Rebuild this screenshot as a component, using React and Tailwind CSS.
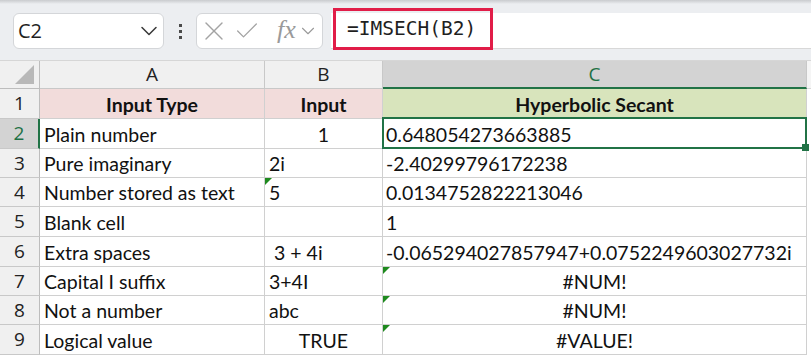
import { ChevronDown, X, Check } from 'lucide-react';

const ROWS = [
  { n: 1, h: 'h-[30px]', a: 'Input Type', b: 'Input', c: 'Hyperbolic Secant', head: true },
  { n: 2, h: 'h-[30px]', a: 'Plain number', b: '1', bAlign: 'center', c: '0.648054273663885', selected: true },
  { n: 3, h: 'h-[29px]', a: 'Pure imaginary', b: '2i', c: '-2.40299796172238' },
  { n: 4, h: 'h-[29px]', a: 'Number stored as text', b: '5', bFlag: true, c: '0.0134752822213046' },
  { n: 5, h: 'h-[30px]', a: 'Blank cell', b: '', c: '1' },
  { n: 6, h: 'h-[30px]', a: 'Extra spaces', b: '\u00a03 + 4i', c: '-0.065294027857947+0.0752249603027732i' },
  { n: 7, h: 'h-[29px]', a: 'Capital I suffix', b: '3+4I', c: '#NUM!', cAlign: 'center', cFlag: true },
  { n: 8, h: 'h-[29px]', a: 'Not a number', b: 'abc', c: '#NUM!', cAlign: 'center', cFlag: true },
  { n: 9, h: 'h-[30px]', a: 'Logical value', b: 'TRUE', bAlign: 'center', c: '#VALUE!', cAlign: 'center', cFlag: true },
];

function Flag() {
  return (
    <span className="absolute left-0 top-0 w-0 h-0 border-t-[7px] border-t-[#1e8a1e] border-r-[7px] border-r-transparent" />
  );
}

function Cell({ width, align, flag, head, bg, overlay, children, extra = '' }) {
  const justify = align === 'center' ? 'justify-center' : 'justify-start';
  return (
    <div className={`relative ${width} h-full flex items-center ${justify} px-[4px] pt-[2px] border-r border-b border-[#d0d0d0] ${bg} ${head ? 'font-bold' : ''} ${extra}`}>
      {flag && <Flag />}
      <span className="whitespace-pre leading-none">{children}</span>
      {overlay}
    </div>
  );
}

function Toolbar() {
  return (
    <div className="relative h-[61px] bg-[#eceef1] border-b border-[#d6d6d6]">
      <div className="absolute inset-x-0 top-0 h-[4px] bg-gradient-to-b from-[#c9cbce] to-[#eceef1]" />
      <div className="flex items-start pt-[13px] pl-[13px]">
        <div className="w-[151px] h-[36px] rounded-[6px] border border-[#d4d6d9] bg-white flex items-center justify-between pl-[4px] pr-0">
          <span className="text-[20px] text-[#1f1f1f] font-['Open_Sans',sans-serif]">C2</span>
          <ChevronDown size={28} strokeWidth={1.3} className="text-[#3a3a3a]" />
        </div>
        <div className="w-[32px] h-[36px] flex flex-col items-center justify-center gap-[3px]">
          <span className="w-[3px] h-[3px] bg-[#4a4a4a]" />
          <span className="w-[3px] h-[3px] bg-[#4a4a4a]" />
          <span className="w-[3px] h-[3px] bg-[#4a4a4a]" />
        </div>
        <div className="w-[127px] h-[36px] rounded-[6px] border border-[#d4d6d9] bg-white flex items-center pl-[1px]">
          <X size={32} strokeWidth={1} className="text-[#a3a3a3]" />
          <Check size={28} strokeWidth={1.1} className="ml-[3px] text-[#a3a3a3]" />
          <span className="ml-[16px] text-[26px] italic text-[#9a9a9a] font-['Liberation_Serif',serif] leading-none -mt-[2px]">fx</span>
          <ChevronDown size={22} strokeWidth={1.2} className="ml-[1px] text-[#9a9a9a]" />
        </div>
        <div className="ml-[8px] flex-1 h-[36px] bg-white border-b border-[#d8d8d8] flex items-start pl-[2px]">
          <div className="-mt-[5px] w-[160px] h-[42px] border-[3px] border-[#e11d48] flex items-center pl-[11px]">
            <span className="text-[19.5px] text-[#1f1f1f] font-['DejaVu_Sans_Mono',monospace] leading-none">=IMSECH(B2)</span>
          </div>
        </div>
      </div>
    </div>
  );
}

export default function App() {
  return (
    <div className="w-[811px] h-[357px] overflow-hidden bg-white text-[#111] font-['Lato',sans-serif]">
      <Toolbar />
      <div className="flex h-[28px] bg-[#f0f0f0] text-[19px] font-['Open_Sans',sans-serif] text-[#222]">
        <div className="relative w-[40px] h-full border-r border-b border-[#bdbdbd]">
          <span className="absolute right-[5px] bottom-[4px] w-0 h-0 border-b-[19px] border-b-[#b8b8b8] border-l-[19px] border-l-transparent" />
        </div>
        <div className="w-[225px] h-full flex items-center justify-center border-r border-b border-[#c8c8c8]">A</div>
        <div className="w-[118px] h-full flex items-center justify-center border-r border-b border-[#c8c8c8]">B</div>
        <div className="w-[424px] h-full flex items-center justify-center bg-[#d3d3d3] text-[#1e7145] border-r border-[#c8c8c8] border-b-2 border-b-[#217346]">C</div>
        <div className="flex-1 h-full bg-[#f5f5f5] border-b border-[#d8d8d8]" />
      </div>
      {ROWS.map((r) => (
        <div key={r.n} className={`relative flex ${r.h} text-[19.5px] ${r.selected ? 'z-10' : ''}`}>
          <div
            className={`w-[40px] h-full flex items-center justify-center font-['Open_Sans',sans-serif] text-[19px] border-b border-[#c8c8c8] ${
              r.selected ? 'bg-[#d3d3d3] text-[#1e7145] border-r-2 border-r-[#217346]' : 'bg-[#f0f0f0] text-[#222] border-r border-r-[#bdbdbd]'
            }`}
          >
            {r.n}
          </div>
          <Cell width="w-[225px]" align={r.head ? 'center' : 'left'} head={r.head} bg={r.head ? 'bg-[#f2dcdb]' : 'bg-white'}>
            {r.a}
          </Cell>
          <Cell width="w-[118px]" align={r.head ? 'center' : r.bAlign} flag={r.bFlag} head={r.head} bg={r.head ? 'bg-[#f2dcdb]' : 'bg-white'}>
            {r.b}
          </Cell>
          <Cell
            width="w-[424px]"
            align={r.head ? 'center' : r.cAlign}
            flag={r.cFlag}
            head={r.head}
            bg={r.head ? 'bg-[#d8e4bc]' : 'bg-white'}
            extra="!px-[3px]"
            overlay={
              r.selected && (
                <span className="absolute z-10 -left-[1px] -top-[2px] -right-[1px] -bottom-[1px] border-2 border-[#217346]">
                  <span className="absolute -right-[4px] -bottom-[4px] w-[7px] h-[7px] bg-[#217346]" />
                </span>
              )
            }
          >
            {r.c}
          </Cell>
          <div className="flex-1 h-full bg-white" />
        </div>
      ))}
    </div>
  );
}
